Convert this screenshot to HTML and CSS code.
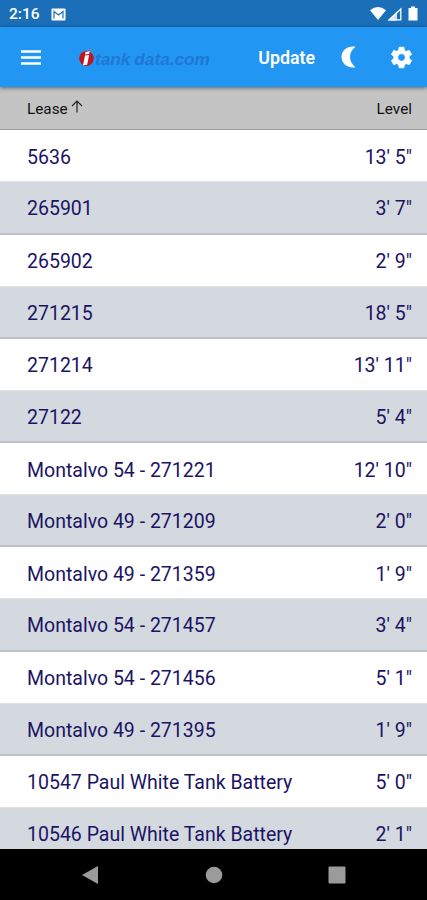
FILE: index.html
```html
<!DOCTYPE html>
<html lang="en">
<head>
    <meta charset="UTF-8">
    <meta name="viewport" content="width=device-width, initial-scale=1.0">
    <title>Tank Data</title>
    <link rel="stylesheet" href="styles.css">
</head>
<body>
    <div class="status-bar">
        <span class="clock">2:16</span>
        <svg class="mail-icon" width="15" height="13" viewBox="0 0 15 13">
            <rect x="0.5" y="0.5" width="14" height="12" rx="1" fill="#fff"/>
            <path d="M3 10.5V3.500l4.500 3.500L12 3.500v7" fill="none" stroke="#1a6fb8" stroke-width="1.200"/>
        </svg>
        <svg class="system-icons" width="50" height="16" viewBox="0 0 50 16">
            <path d="M0 4.200Q8 -2 16 4.200L8 14z" fill="#fff"/>
            <path d="M17.500 14.500L27 5.500v9z" fill="#fff" fill-opacity="0.800"/>
            <path d="M19.500 13.800L30.800 3v10.800z" fill="none" stroke="#fff" stroke-width="1.300"/>
            <path d="M41 0.500h4V2h2.500v12.500h-9V2H41z" fill="#fff"/>
        </svg>
    </div>

    <div class="app-bar">
        <svg class="menu-icon" width="20" height="15" viewBox="0 0 20 15">
            <path d="M0 1.500h20M0 7.500h20M0 13.500h20" stroke="#fff" stroke-width="2.600"/>
        </svg>
        <div class="logo">
            <svg width="16" height="20" viewBox="0 0 16 20">
                <ellipse cx="7.500" cy="11.500" rx="7.300" ry="7.500" fill="#c4131b"/>
                <path d="M6.500 5l4.200-.8-.6 2.800-4 .5zM5.900 8.500l4.200-.5-1.900 9.800-4.200.500 1.700-8z" fill="#fff"/>
                <path d="M8.500 3.500l4.500-2-1.500 2.300z" fill="#c75a80"/>
            </svg>
            <span class="logo-text">tank<span class="logo-word">data.com</span></span>
        </div>
        <span class="update">Update</span>
        <svg class="moon-icon" width="16" height="22" viewBox="0 0 16 22">
            <path d="M14.500 0.800C6.500 -0.500 0.500 4.500 0.500 11S6.500 22.500 14.500 21.200C11 18.500 9 15 9 11S11 3.500 14.500 0.800z" fill="#fff"/>
        </svg>
        <svg class="gear-icon" width="25" height="25" viewBox="0 0 24 24">
            <path fill="#fff" stroke="#fff" stroke-width="0.500" d="M19.430 12.980c.04-.32.07-.64.07-.98s-.03-.66-.07-.98l2.110-1.650c.19-.15.24-.42.12-.64l-2-3.460c-.12-.22-.39-.3-.61-.22l-2.490 1c-.52-.4-1.080-.73-1.690-.98l-.38-2.650C14.460 2.180 14.250 2 14 2h-4c-.25 0-.46.18-.49.42l-.38 2.650c-.61.25-1.170.59-1.690.98l-2.490-1c-.23-.09-.49 0-.61.22l-2 3.460c-.13.22-.07.49.12.64l2.110 1.650c-.04.32-.07.65-.07.98s.03.66.07.98l-2.110 1.650c-.19.15-.24.42-.12.64l2 3.460c.12.22.39.3.61.22l2.490-1c.52.4 1.080.73 1.690.98l.38 2.650c.03.24.24.42.49.42h4c.25 0 .46-.18.49-.42l.38-2.650c.61-.25 1.170-.59 1.690-.98l2.490 1c.23.09.49 0 .61-.22l2-3.460c.12-.22.07-.49-.12-.64l-2.110-1.650zM12 15.500c-1.930 0-3.500-1.570-3.500-3.500s1.570-3.500 3.500-3.500 3.500 1.570 3.500 3.500-1.570 3.500-3.500 3.500z"/>
        </svg>
    </div>

    <div class="list-header">
        <span class="sort">Lease
            <svg width="12" height="13" viewBox="0 0 12 13">
                <path d="M6 12.500V1.200M1 6l5-5 5 5" fill="none" stroke="#222" stroke-width="1.200"/>
            </svg>
        </span>
        <span>Level</span>
    </div>

    <div class="list">
        <div class="row"><span>5636</span><span>13' 5"</span></div>
        <div class="row"><span>265901</span><span>3' 7"</span></div>
        <div class="row"><span>265902</span><span>2' 9"</span></div>
        <div class="row"><span>271215</span><span>18' 5"</span></div>
        <div class="row"><span>271214</span><span>13' 11"</span></div>
        <div class="row"><span>27122</span><span>5' 4"</span></div>
        <div class="row"><span>Montalvo 54 - 271221</span><span>12' 10"</span></div>
        <div class="row"><span>Montalvo 49 - 271209</span><span>2' 0"</span></div>
        <div class="row"><span>Montalvo 49 - 271359</span><span>1' 9"</span></div>
        <div class="row"><span>Montalvo 54 - 271457</span><span>3' 4"</span></div>
        <div class="row"><span>Montalvo 54 - 271456</span><span>5' 1"</span></div>
        <div class="row"><span>Montalvo 49 - 271395</span><span>1' 9"</span></div>
        <div class="row"><span>10547 Paul White Tank Battery</span><span>5' 0"</span></div>
        <div class="row"><span>10546 Paul White Tank Battery</span><span>2' 1"</span></div>
    </div>

    <div class="nav-bar">
        <svg width="18" height="20" viewBox="0 0 18 20"><path d="M17 1v18L1 10z" fill="#9b9b9b"/></svg>
        <svg width="18" height="18" viewBox="0 0 18 18"><circle cx="9" cy="9" r="8.300" fill="#9b9b9b"/></svg>
        <svg width="18" height="18" viewBox="0 0 18 18"><rect x="0.500" y="0.500" width="17" height="17" rx="1" fill="#9b9b9b"/></svg>
    </div>
</body>
</html>
```
FILE: styles.css
```css
* {
    box-sizing: border-box;
}
body {
    margin: 0;
    height: 900px;
    display: flex;
    flex-direction: column;
    overflow: hidden;
    font-family: Roboto, sans-serif;
    background: #fff;
}
svg {
    display: block;
    flex-shrink: 0;
}
.status-bar {
    flex: 0 0 27px;
    display: flex;
    align-items: center;
    padding: 1px 7px 0 9px;
    background: #1a6fb8;
    color: #fff;
}
.clock {
    width: 42px;
    font-size: 15.500px;
    font-weight: 500;
    line-height: 26px;
}
.system-icons {
    margin-left: auto;
}
.app-bar {
    flex: 0 0 60px;
    display: flex;
    align-items: center;
    padding: 0 13px 0 21px;
    background: #2196f3;
    box-shadow: 0 1px 4px rgba(0,0,0,0.5);
    z-index: 1;
}
.logo {
    display: flex;
    align-items: center;
    width: 180px;
    margin-left: 38px;
}
.logo svg {
    margin-top: 0;
}
.logo-text {
    font: italic bold 17.200px/20px "Liberation Sans", sans-serif;
    color: #1e78d2;
    margin-top: 4px;
}
.logo-word {
    margin-left: 4px;
}
.update {
    width: 83px;
    font-size: 17.800px;
    font-weight: 600;
    color: #fff;
}
.moon-icon {
    margin-right: 32px;
}
.list-header {
    flex: 0 0 43.300px;
    display: flex;
    align-items: center;
    justify-content: space-between;
    padding: 2px 15px 0 27px;
    background: #c4c4c4;
    border-bottom: 1px solid #999;
    font-size: 15.300px;
    color: #111;
}
.sort {
    display: flex;
    gap: 3px;
}
.list {
    flex: 1;
    overflow: hidden;
}
.row {
    display: flex;
    align-items: center;
    justify-content: space-between;
    height: 51.130px;
    padding: 3px 15px 0 27px;
    font-size: 19.500px;
    color: #1b1464;
}
.row:nth-child(even) {
    height: 53.130px;
    background: #d4d9e0;
    border-top: 1px solid #dfe2e5;
    border-bottom: 2px solid #bcc1c5;
}
.nav-bar {
    flex: 0 0 51px;
    display: flex;
    justify-content: space-between;
    align-items: center;
    padding: 0 81px;
    background: #000;
}
```
